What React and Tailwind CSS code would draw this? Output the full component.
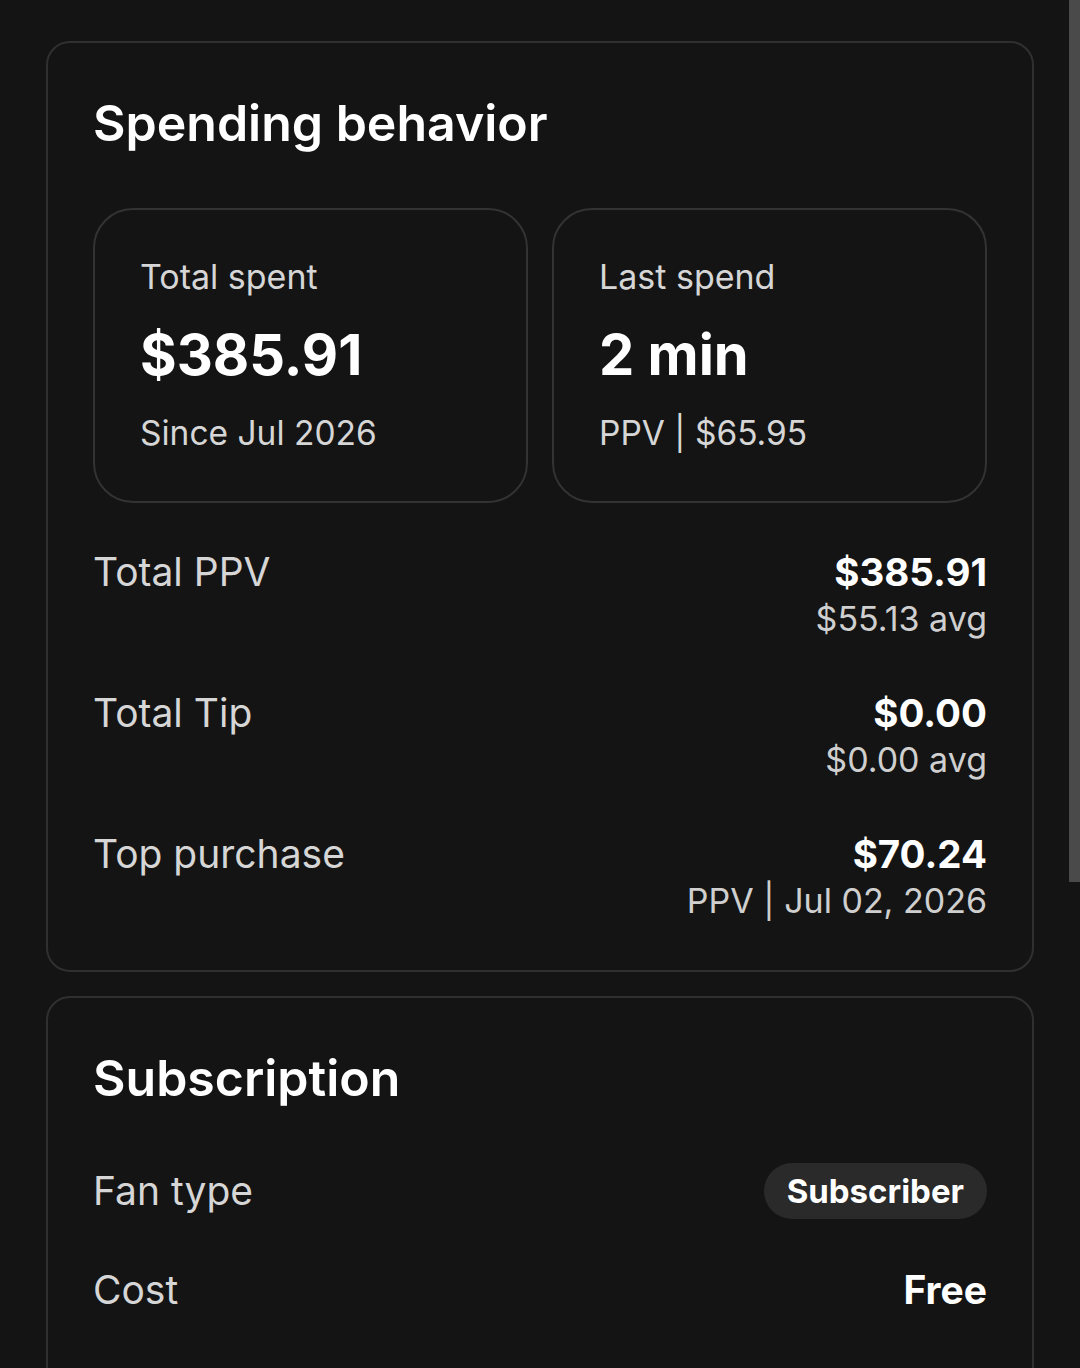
import React from 'react';

const stats = [
  { label: 'Total spent', value: '$385.91', note: 'Since Jul 2026' },
  { label: 'Last spend', value: '2 min', note: 'PPV | $65.95' },
];

const rows = [
  { label: 'Total PPV', value: '$385.91', sub: '$55.13 avg' },
  { label: 'Total Tip', value: '$0.00', sub: '$0.00 avg' },
  { label: 'Top purchase', value: '$70.24', sub: 'PPV | Jul 02, 2026' },
];

const StatBox = ({ label, value, note }) => (
  <div className="flex-1 rounded-[40px] border-2 border-[#333333] px-[45px] pt-[47px] pb-[48px]">
    <p className="text-[34px] leading-[40px] text-[#d6d6d6]">{label}</p>
    <p className="mt-[25px] text-[56px] leading-[66px] font-bold text-white">{value}</p>
    <p className="mt-[25px] text-[33.5px] leading-[40px] text-[#d6d6d6]">{note}</p>
  </div>
);

const App = () => {
  return (
    <div
      className="relative min-h-[1368px] bg-[#141414] px-[46px] pt-[41px] pb-10"
      style={{ fontFamily: 'Inter, "Noto Sans", sans-serif' }}
    >
      <div className="absolute top-0 right-0 h-[882px] w-[11px] bg-[#4a4a4a]" />

      <section className="rounded-[24px] border-2 border-[#303030] px-[45px] pt-[50px] pb-[49px]">
        <h2 className="text-[50px] leading-[60px] font-semibold text-white">Spending behavior</h2>

        <div className="mt-[55px] flex gap-[24px]">
          {stats.map(s => (
            <StatBox key={s.label} {...s} />
          ))}
        </div>

        <div className="mt-[45px] flex flex-col gap-[50px]">
          {rows.map(r => (
            <div key={r.label} className="flex items-start justify-between">
              <p className="text-[39px] leading-[48px] text-[#d6d6d6]">{r.label}</p>
              <div className="text-right">
                <p className="text-[38.5px] leading-[48px] font-bold text-white">{r.value}</p>
                <p className="mt-[3px] text-[34px] leading-[40px] text-[#cfcfcf]">{r.sub}</p>
              </div>
            </div>
          ))}
        </div>
      </section>

      <section className="mt-[24px] rounded-[24px] border-2 border-[#303030] px-[45px] pt-[50px] pb-[90px]">
        <h2 className="text-[50px] leading-[60px] font-semibold text-white">Subscription</h2>

        <div className="mt-[55px] flex items-center justify-between">
          <p className="text-[39px] leading-[48px] text-[#d6d6d6]">Fan type</p>
          <span className="rounded-full bg-[#2a2a2a] px-[23px] py-[7px] text-[33px] leading-[42px] font-bold text-white">
            Subscriber
          </span>
        </div>

        <div className="mt-[47px] flex items-center justify-between">
          <p className="text-[39px] leading-[48px] text-[#d6d6d6]">Cost</p>
          <p className="text-[39px] leading-[48px] font-bold text-white">Free</p>
        </div>
      </section>
    </div>
  );
};

export default App;
